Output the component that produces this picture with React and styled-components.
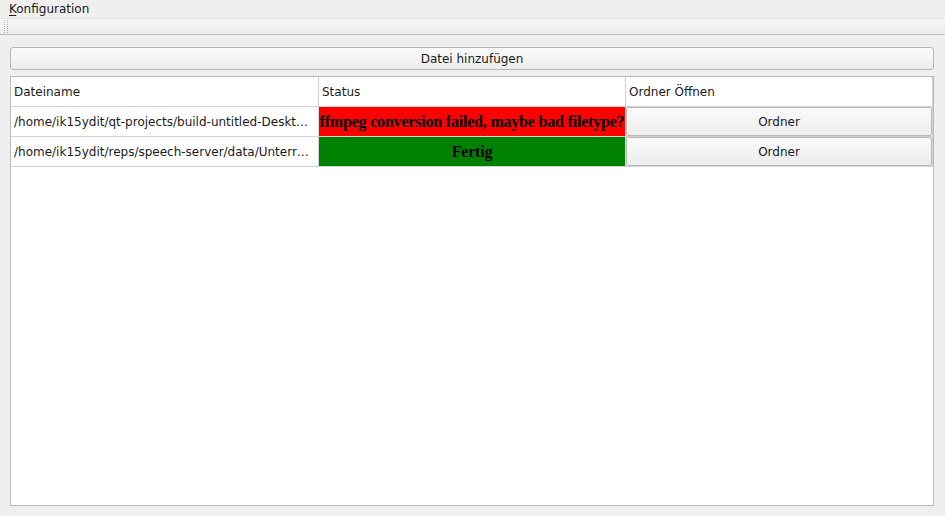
import React from 'react';
import styled, { createGlobalStyle } from 'styled-components';

const GlobalStyle = createGlobalStyle`
  html, body {
    margin: 0;
    padding: 0;
    background: #efefef;
    font-family: "DejaVu Sans", "Liberation Sans", sans-serif;
    font-size: 12px;
    color: #1a1a1a;
  }
`;

const files = [
  {
    path: '/home/ik15ydit/qt-projects/build-untitled-Desktop_Qt_5_9-Debug/aufnahme.wav',
    status: 'ffmpeg conversion failed, maybe bad filetype?',
    color: '#ff0000',
  },
  {
    path: '/home/ik15ydit/reps/speech-server/data/UnterrWochen.mp3',
    status: 'Fertig',
    color: '#008000',
  },
];

const App = () => {
  return (
    <Window>
      <GlobalStyle />
      <MenuBar>
        <MenuItem>
          <u>K</u>onfiguration
        </MenuItem>
      </MenuBar>
      <ToolBar>
        <Handle />
      </ToolBar>
      <Content>
        <PushButton>Datei hinzufügen</PushButton>
        <Table>
          <HeaderCell>Dateiname</HeaderCell>
          <HeaderCell>Status</HeaderCell>
          <HeaderCell>Ordner Öffnen</HeaderCell>
          {files.map((f) => (
            <React.Fragment key={f.path}>
              <PathCell>
                <Ellipsis>{f.path}</Ellipsis>
              </PathCell>
              <StatusCell $bg={f.color}>
                <span>{f.status}</span>
              </StatusCell>
              <ButtonCell>
                <CellButton>Ordner</CellButton>
              </ButtonCell>
            </React.Fragment>
          ))}
        </Table>
      </Content>
    </Window>
  );
};

export default App;

const Window = styled.div`
  width: 945px;
  height: 516px;
  display: flex;
  flex-direction: column;
  overflow: hidden;
`;

const MenuBar = styled.div`
  height: 18px;
  display: flex;
  align-items: center;
  padding-left: 9px;
`;

const MenuItem = styled.span`
  line-height: 16px;
  color: #1a1a1a;
  u {
    text-decoration: underline;
    text-underline-offset: 2px;
  }
`;

const ToolBar = styled.div`
  height: 15px;
  border-top: 1px solid #e2e2e2;
  border-bottom: 1px solid #bcbcbc;
  background: linear-gradient(#f6f6f6, #ececec);
  display: flex;
  align-items: center;
  padding-left: 4px;
`;

const Handle = styled.div`
  width: 4px;
  height: 13px;
  border-left: 1px dotted #b4b4b4;
  border-right: 1px dotted #b4b4b4;
  box-sizing: border-box;
`;

const Content = styled.div`
  flex: 1;
  display: flex;
  flex-direction: column;
  gap: 6px;
  padding: 12px 11px 10px 10px;
  min-height: 0;
`;

const PushButton = styled.button`
  height: 23px;
  margin: 0;
  padding: 0;
  border: 1px solid #b4b4b4;
  border-radius: 3px;
  background: linear-gradient(#fbfbfb, #ececec);
  font-family: inherit;
  font-size: 12px;
  color: #1a1a1a;
`;

const Table = styled.div`
  flex: 1;
  background: #ffffff;
  border: 1px solid #b9b9b9;
  display: grid;
  grid-template-columns: 308px 307px 307px;
  grid-auto-rows: 30px;
  align-content: start;
`;

const Cell = styled.div`
  border-right: 1px solid #d2d2d2;
  border-bottom: 1px solid #d2d2d2;
  display: flex;
  align-items: center;
  overflow: hidden;
`;

const HeaderCell = styled(Cell)`
  padding-left: 3px;
  color: #1a1a1a;
`;

const PathCell = styled(Cell)`
  padding: 0 4px 0 3px;
`;

const Ellipsis = styled.span`
  white-space: nowrap;
  overflow: hidden;
  text-overflow: ellipsis;
`;

const StatusCell = styled(Cell)`
  background: ${(p) => p.$bg};
  justify-content: center;
  span {
    white-space: nowrap;
    flex-shrink: 0;
    font-family: "Liberation Serif", "Times New Roman", serif;
    font-weight: bold;
    font-size: 16px;
    letter-spacing: -0.2px;
    color: #000000;
  }
`;

const ButtonCell = styled(Cell)`
  align-items: stretch;
`;

const CellButton = styled.button`
  flex: 1;
  margin: 0;
  padding: 0;
  border: 1px solid #b8b8b8;
  border-radius: 2px;
  background: linear-gradient(#fbfbfb, #ececec);
  font-family: inherit;
  font-size: 12px;
  color: #1a1a1a;
`;
